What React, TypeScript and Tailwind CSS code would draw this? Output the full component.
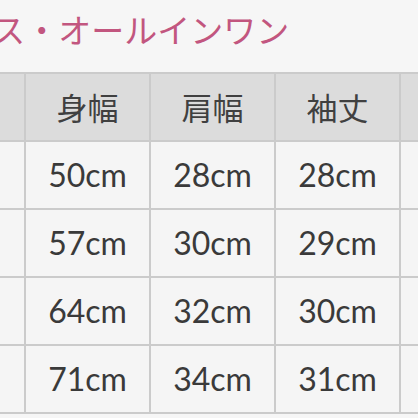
const header = ["", "身幅", "肩幅", "袖丈", ""];

const rows = [
  ["50cm", "28cm", "28cm"],
  ["57cm", "30cm", "29cm"],
  ["64cm", "32cm", "30cm"],
  ["71cm", "34cm", "31cm"],
];

export default function App() {
  return (
    <div className="h-[418px] w-[418px] overflow-hidden bg-[#f6f6f6]">
      {/* Category title, cut at the left edge */}
      <div className="h-[72px] overflow-hidden whitespace-nowrap pt-[13px]">
        <h2 className="-ml-[138px] text-[33px] font-normal leading-[33px] text-[#c2567f] [font-family:'Noto_Sans_CJK_JP',sans-serif]">
          ワンピース・オールインワン
        </h2>
      </div>

      {/* Size table */}
      <div className="grid grid-cols-[24px_123px_123px_123px_1fr] gap-[2px] bg-[#cbcbcb] py-[2px]">
        {header.map((h, i) => (
          <div
            key={`h${i}`}
            className="flex h-[66px] items-center justify-center bg-[#dcdcdc] text-[31px] text-[#404040] [font-family:'Noto_Sans_CJK_JP',sans-serif]"
          >
            {h}
          </div>
        ))}
        {rows.map((row, r) => (
          <>
            <div key={`a${r}`} className="h-[66px] bg-[#f5f5f5]" />
            {row.map((v, c) => (
              <div
                key={`c${r}-${c}`}
                className="flex h-[66px] items-center justify-center bg-[#f5f5f5] text-[32px] text-[#3a3a3a] [font-family:Lato,sans-serif]"
              >
                {v}
              </div>
            ))}
            <div key={`b${r}`} className="h-[66px] bg-[#f5f5f5]" />
          </>
        ))}
      </div>
    </div>
  );
}
